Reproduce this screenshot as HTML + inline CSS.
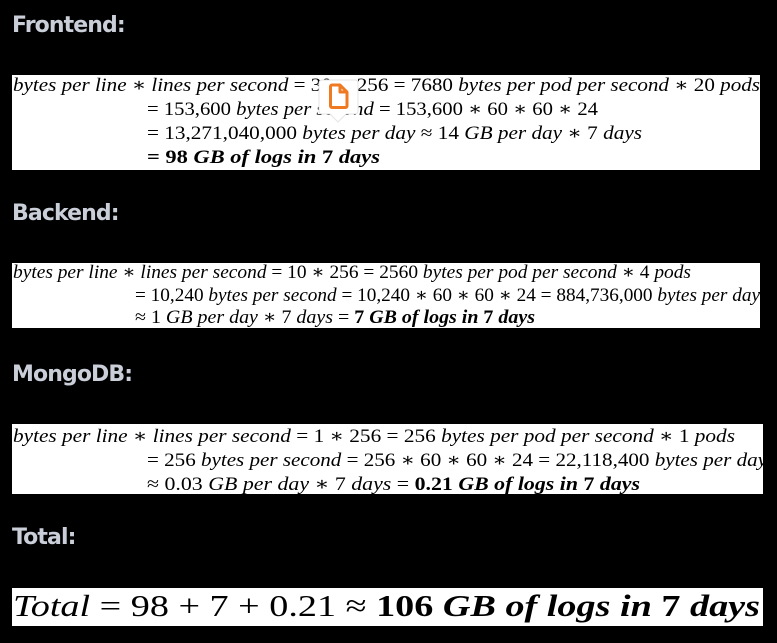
<!DOCTYPE html>
<html><head><meta charset="utf-8"><style>
html,body{margin:0;padding:0;background:#000;width:777px;height:643px;overflow:hidden}
.h{position:absolute;left:12px;font:bold 22px "DejaVu Sans","Liberation Sans",sans-serif;color:#c9ced8;letter-spacing:-0.9px}
svg{position:absolute;left:0;top:0}
text{font-family:"Liberation Serif","DejaVu Serif",serif;font-style:italic;fill:#000}
.n{font-style:normal}
.b{font-weight:bold}
</style></head><body>
<div class="h" style="top:13px">Frontend:</div>
<div class="h" style="top:201px">Backend:</div>
<div class="h" style="top:362px">MongoDB:</div>
<div class="h" style="top:525px">Total:</div>
<svg width="777" height="643">
<rect x="12" y="75" width="748" height="95" fill="#fff"/>
<rect x="12" y="263" width="748" height="65" fill="#fff"/>
<rect x="12" y="424" width="751" height="70" fill="#fff"/>
<rect x="12" y="588" width="751" height="38" fill="#fff"/>
<g font-size="19">
<text x="13" y="91" textLength="747" lengthAdjust="spacingAndGlyphs">bytes per line ∗ lines per second <tspan class="n">= 30 ∗ 256 = 7680</tspan> bytes per pod per second ∗ <tspan class="n">20</tspan> pods</text>
<text x="147" y="115" textLength="451" lengthAdjust="spacingAndGlyphs"><tspan class="n">= 153,600</tspan> bytes per second <tspan class="n">=  153,600 ∗ 60 ∗ 60 ∗ 24</tspan></text>
<text x="147" y="139" textLength="495" lengthAdjust="spacingAndGlyphs"><tspan class="n">= 13,271,040,000</tspan> bytes per day <tspan class="n"> ≈ 14</tspan> GB per day ∗ <tspan class="n">7</tspan> days</text>
<text x="147" y="163" textLength="233" lengthAdjust="spacingAndGlyphs" class="b"><tspan class="n">= 98</tspan> GB of logs in <tspan class="n">7</tspan> days</text>
<text x="13" y="278" textLength="678" lengthAdjust="spacingAndGlyphs">bytes per line ∗ lines per second <tspan class="n">= 10 ∗ 256 = 2560</tspan> bytes per pod per second ∗ <tspan class="n">4</tspan> pods</text>
<text x="135" y="301" textLength="625" lengthAdjust="spacingAndGlyphs"><tspan class="n">= 10,240</tspan> bytes per second <tspan class="n">= 10,240 ∗ 60 ∗ 60 ∗ 24 = 884,736,000</tspan> bytes per day</text>
<text x="135" y="323" textLength="400" lengthAdjust="spacingAndGlyphs"><tspan class="n">≈ 1</tspan> GB per day ∗ <tspan class="n">7</tspan> days <tspan class="n">=</tspan> <tspan class="b"><tspan class="n">7</tspan> GB of logs in <tspan class="n">7</tspan> days</tspan></text>
<text x="13" y="442" textLength="722" lengthAdjust="spacingAndGlyphs">bytes per line ∗ lines per second <tspan class="n">= 1 ∗ 256 = 256</tspan> bytes per pod per second ∗ <tspan class="n">1</tspan> pods</text>
<text x="147" y="466" textLength="620" lengthAdjust="spacingAndGlyphs"><tspan class="n">= 256</tspan> bytes per second <tspan class="n">= 256 ∗ 60 ∗ 60 ∗ 24 = 22,118,400</tspan> bytes per day</text>
<text x="147" y="490" textLength="493" lengthAdjust="spacingAndGlyphs"><tspan class="n">≈ 0.03</tspan> GB per day ∗ <tspan class="n">7</tspan> days <tspan class="n">=</tspan> <tspan class="b"><tspan class="n">0.21</tspan> GB of logs in <tspan class="n">7</tspan> days</tspan></text>
</g>
<text x="13" y="616" font-size="31" textLength="747" lengthAdjust="spacingAndGlyphs">Total <tspan class="n">= 98 + 7 + 0.21  ≈</tspan> <tspan class="b"><tspan class="n">106</tspan> GB of logs in <tspan class="n">7</tspan> days</tspan></text>
<g>
<path d="M322 80 h33 a3 3 0 0 1 3 3 v28 a3 3 0 0 1 -3 3 h-9 l-8 8 l-8 -8 h-8 a3 3 0 0 1 -3 -3 v-28 a3 3 0 0 1 3 -3z" fill="#fff" stroke="#e4e4e4"/>
<path d="M332 85 h8 l7 7 v14 a1.5 1.5 0 0 1 -1.5 1.5 h-13.5 a1.5 1.5 0 0 1 -1.5 -1.5 v-19.5 a1.5 1.5 0 0 1 1.5 -1.5z M340 85 v7 h7" fill="none" stroke="#f07a22" stroke-width="3" stroke-linejoin="round"/>
</g>
</svg>
</body></html>
